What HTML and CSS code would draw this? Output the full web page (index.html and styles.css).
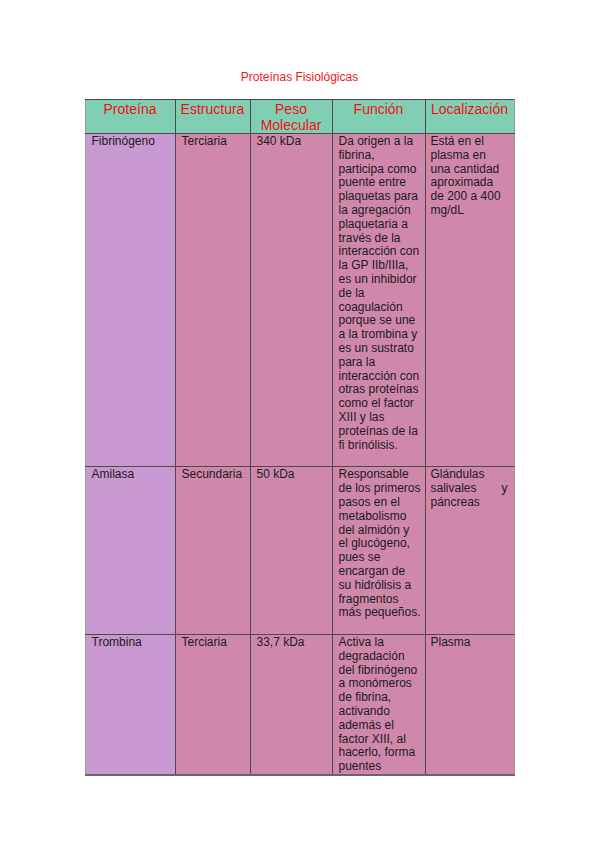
FILE: index.html
```html
<!DOCTYPE html>
<html lang="es">
<head>
<meta charset="utf-8">
<title>Proteínas Fisiológicas</title>
<link rel="stylesheet" href="styles.css">
</head>
<body>
<main class="page">
  <h1 class="title">Proteínas Fisiológicas</h1>
  <table class="grid">
    <colgroup>
      <col class="c-prot">
      <col class="c-estr">
      <col class="c-peso">
      <col class="c-func">
      <col class="c-loc">
    </colgroup>
    <thead>
      <tr>
        <th>Proteína</th>
        <th>Estructura</th>
        <th>Peso Molecular</th>
        <th>Función</th>
        <th>Localización</th>
      </tr>
    </thead>
    <tbody>
      <tr class="row-pad">
        <td class="name">Fibrinógeno</td>
        <td>Terciaria</td>
        <td>340 kDa</td>
        <td class="func">Da origen a la fibrina, participa como puente entre plaquetas para la agregación plaquetaria a través de la interacción con la GP IIb/IIIa, es un inhibidor de la coagulación porque se une a la trombina y es un sustrato para la interacción con otras proteínas como el factor XIII y las proteínas de la fi brinólisis.</td>
        <td class="loc">Está en el plasma en una cantidad aproximada de 200 a 400 mg/dL</td>
      </tr>
      <tr class="row-pad">
        <td class="name">Amilasa</td>
        <td>Secundaria</td>
        <td>50 kDa</td>
        <td class="func">Responsable de los primeros pasos en el metabolismo del almidón y el glucógeno, pues se encargan de su&nbsp;hidrólisis a fragmentos más pequeños.</td>
        <td class="loc justify">Glándulas salivales y páncreas</td>
      </tr>
      <tr class="row-last">
        <td class="name">Trombina</td>
        <td>Terciaria</td>
        <td>33,7 kDa</td>
        <td class="func">Activa la degradación del fibrinógeno a monómeros de fibrina, activando además el factor XIII, al hacerlo, forma puentes</td>
        <td class="loc">Plasma</td>
      </tr>
    </tbody>
  </table>
</main>
</body>
</html>
```
FILE: styles.css
```css
html, body {
  margin: 0;
  padding: 0;
  background: #ffffff;
}

body {
  font-family: "Liberation Sans", Arial, sans-serif;
  color: #1e1a1c;
}

.page {
  width: 599px;
  min-height: 848px;
  padding-top: 70px;
  box-sizing: border-box;
}

.title {
  margin: 0 0 15px;
  font-size: 12px;
  line-height: 14px;
  font-weight: normal;
  text-align: center;
  color: #f01818;
}

.grid {
  width: 429px;
  margin: 0 auto;
  table-layout: fixed;
  border-collapse: collapse;
  font-size: 12px;
  line-height: 13.8px;
}

.c-prot { width: 90px; }
.c-estr { width: 75px; }
.c-peso { width: 82px; }
.c-func { width: 93px; }
.c-loc  { width: 89px; }

.grid th,
.grid td {
  border: 1px solid #4e4a4c;
  vertical-align: top;
}

.grid th {
  background: #80cfb4;
  color: #f01010;
  font-size: 14px;
  line-height: 16px;
  font-weight: normal;
  text-align: center;
  padding: 1px 0 0;
}

.grid td {
  background: #d088aa;
  text-align: left;
  padding: 1px 3px 0 6px;
}

.grid td.name {
  background: #c898d0;
}

.grid td.func {
  padding-right: 3px;
}

.grid td.loc {
  padding-left: 5px;
  padding-right: 6px;
}

.grid td.justify {
  text-align: justify;
}

.grid .row-pad td {
  padding-bottom: 14px;
}

.grid tr > :first-child {
  border-left-color: #9a9a9a;
}

.grid tr > :last-child {
  border-right-color: #9a9a9a;
}

.grid .row-last td {
  border-bottom: 2px solid #6a6668;
}
```
